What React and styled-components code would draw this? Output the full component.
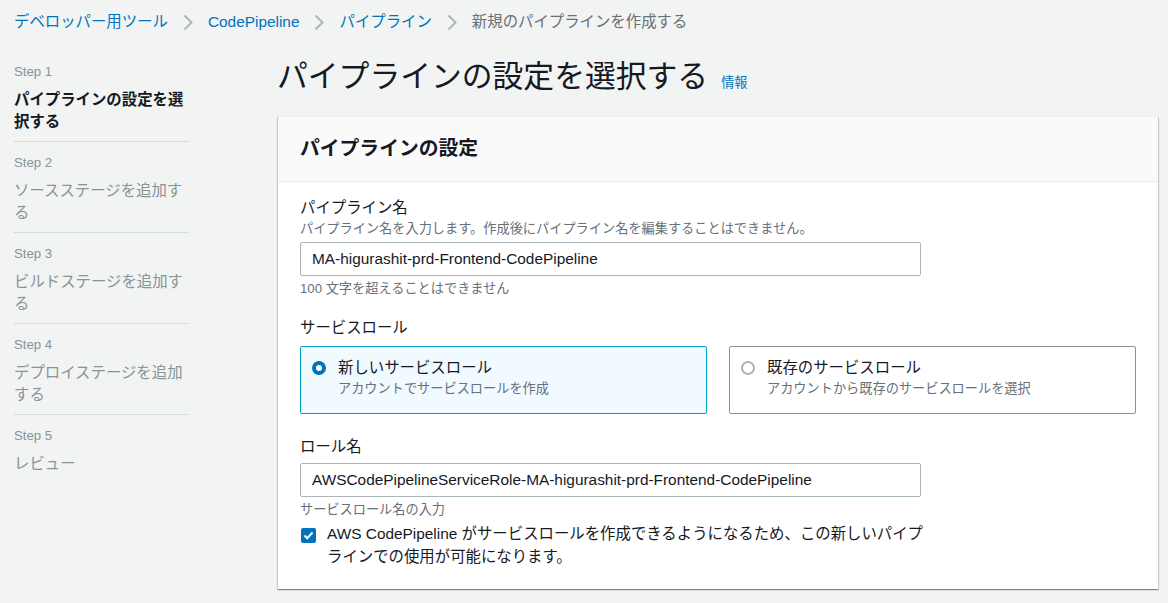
import React from "react";
import styled, { createGlobalStyle } from "styled-components";

const Global = createGlobalStyle`
  html, body { margin: 0; padding: 0; background: #f2f3f3; }
  body {
    font-family: "Liberation Sans", "Noto Sans CJK JP", sans-serif;
    color: #16191f;
    font-size: 15.4px;
  }
  * { box-sizing: border-box; }
`;

const Page = styled.div`
  padding: 12px 10px 12px 14px;
  width: 1168px;
  min-height: 603px;
`;

const Crumbs = styled.nav`
  display: flex;
  align-items: center;
  height: 20px;
  line-height: 20px;
  font-size: 15.4px;
`;

const CrumbLink = styled.a`
  color: #0073bb;
  text-decoration: none;
`;

const CrumbCurrent = styled.span`
  color: #687078;
`;

const Sep = styled.svg`
  width: 10px;
  height: 17px;
  margin: 0 15px 0 15px;
  flex: none;
`;

const Layout = styled.div`
  display: flex;
  align-items: flex-start;
  gap: 89px;
  margin-top: 20px;
`;

const Nav = styled.ol`
  list-style: none;
  margin: 0;
  padding: 11px 0 0 0;
  width: 175px;
  flex: none;
`;

const NavItem = styled.li`
  padding: ${(p) => (p.$first ? "0 0 8px" : "12px 0 8px")};
  border-bottom: ${(p) => (p.$last ? "none" : "1px solid #d5dbdb")};
`;

const StepLabel = styled.div`
  font-size: 13.2px;
  line-height: 18px;
  color: #879596;
  margin-bottom: 8px;
`;

const StepTitle = styled.div`
  font-size: 15.4px;
  line-height: 22px;
  color: ${(p) => (p.$active ? "#16191f" : "#879596")};
  font-weight: ${(p) => (p.$active ? 700 : 400)};
`;

const Content = styled.main`
  flex: 1;
  min-width: 0;
`;

const TitleRow = styled.div`
  display: flex;
  align-items: baseline;
  height: 49px;
  padding-top: 1px;
  margin-left: -1px;
`;

const H1 = styled.h1`
  margin: 0;
  font-size: 30.8px;
  line-height: 48px;
  font-weight: 400;
  color: #16191f;
`;

const Info = styled.a`
  margin-left: 13px;
  font-size: 13.2px;
  color: #0073bb;
  text-decoration: none;
`;

const Card = styled.section`
  margin-top: 15px;
  background: #fff;
  border-top: 1px solid #eaeded;
  box-shadow: 0 1px 1px 0 rgba(0, 28, 36, 0.3), 1px 1px 1px 0 rgba(0, 28, 36, 0.15),
    -1px 1px 1px 0 rgba(0, 28, 36, 0.15);
`;

const CardHeader = styled.header`
  background: #fafafa;
  border-bottom: 1px solid #eaeded;
  padding: 18px 22px 19px;
`;

const H2 = styled.h2`
  margin: 0;
  font-size: 19.8px;
  line-height: 27px;
  font-weight: 700;
`;

const CardBody = styled.div`
  padding: 15px 22px 21px;
`;

const Field = styled.div`
  margin-top: ${(p) => p.$gap || 0}px;
`;

const Label = styled.div`
  font-size: 15.4px;
  line-height: 22px;
  color: #16191f;
`;

const Desc = styled.div`
  font-size: 13.2px;
  line-height: 20px;
  color: #687078;
`;

const Hint = styled.div`
  margin-top: 3px;
  font-size: 13.2px;
  line-height: 20px;
  color: #687078;
`;

const Input = styled.input`
  display: block;
  width: 621px;
  height: 34px;
  margin-top: ${(p) => p.$mt || 3}px;
  padding: 0 11px;
  border: 1px solid #aab7b8;
  border-radius: 2px;
  font-family: inherit;
  font-size: 15.4px;
  color: #16191f;
  background: #fff;
  outline: none;
`;

const Tiles = styled.div`
  display: grid;
  grid-template-columns: 1fr 1fr;
  gap: 22px;
  margin-top: 7px;
`;

const Tile = styled.label`
  display: flex;
  align-items: flex-start;
  gap: 12px;
  height: 68px;
  padding: 10px 14px 0 11px;
  border: 1px solid ${(p) => (p.$selected ? "#00a1c9" : "#879596")};
  background: ${(p) => (p.$selected ? "#f1faff" : "#fff")};
  border-radius: 2px;
`;

const Radio = styled.span`
  flex: none;
  width: 14px;
  height: 14px;
  margin-top: 4px;
  border-radius: 50%;
  border: ${(p) => (p.$checked ? "4px solid #0073bb" : "2px solid #aab7b8")};
  background: #fff;
`;

const TileText = styled.div`
  display: flex;
  flex-direction: column;
`;

const TileTitle = styled.span`
  font-size: 15.4px;
  line-height: 22px;
  color: #16191f;
`;

const TileDesc = styled.span`
  font-size: 13.2px;
  line-height: 19px;
  color: #687078;
`;

const CheckRow = styled.div`
  display: flex;
  align-items: flex-start;
  gap: 11px;
  margin-top: 3px;
`;

const Box = styled.span`
  flex: none;
  width: 15px;
  height: 15px;
  margin-top: 5px;
  margin-left: 1px;
  border-radius: 2px;
  background: #0073bb;
  display: flex;
  align-items: center;
  justify-content: center;
`;

const CheckText = styled.div`
  font-size: 15.4px;
  line-height: 22.5px;
  color: #16191f;
`;

const Chevron = () => (
  <Sep viewBox="0 0 10 17">
    <path d="M1.5 1.5 L8.5 8.5 L1.5 15.5" fill="none" stroke="#aab7b8" strokeWidth="2" />
  </Sep>
);

const steps = [
  { n: 1, t: "パイプラインの設定を選択する", active: true },
  { n: 2, t: "ソースステージを追加する" },
  { n: 3, t: "ビルドステージを追加する" },
  { n: 4, t: "デプロイステージを追加する" },
  { n: 5, t: "レビュー" },
];

export default function App() {
  return (
    <>
      <Global />
      <Page>
        <Crumbs>
          <CrumbLink href="#">デベロッパー用ツール</CrumbLink>
          <Chevron />
          <CrumbLink href="#">CodePipeline</CrumbLink>
          <Chevron />
          <CrumbLink href="#">パイプライン</CrumbLink>
          <Chevron />
          <CrumbCurrent>新規のパイプラインを作成する</CrumbCurrent>
        </Crumbs>
        <Layout>
          <Nav>
            {steps.map((s, i) => (
              <NavItem key={s.n} $first={i === 0} $last={i === steps.length - 1}>
                <StepLabel>Step {s.n}</StepLabel>
                <StepTitle $active={s.active}>{s.t}</StepTitle>
              </NavItem>
            ))}
          </Nav>
          <Content>
            <TitleRow>
              <H1>パイプラインの設定を選択する</H1>
              <Info href="#">情報</Info>
            </TitleRow>
            <Card>
              <CardHeader>
                <H2>パイプラインの設定</H2>
              </CardHeader>
              <CardBody>
                <Field>
                  <Label>パイプライン名</Label>
                  <Desc>パイプライン名を入力します。作成後にパイプライン名を編集することはできません。</Desc>
                  <Input readOnly value="MA-higurashit-prd-Frontend-CodePipeline" />
                  <Hint>100 文字を超えることはできません</Hint>
                </Field>
                <Field $gap={18}>
                  <Label>サービスロール</Label>
                  <Tiles>
                    <Tile $selected>
                      <Radio $checked />
                      <TileText>
                        <TileTitle>新しいサービスロール</TileTitle>
                        <TileDesc>アカウントでサービスロールを作成</TileDesc>
                      </TileText>
                    </Tile>
                    <Tile>
                      <Radio />
                      <TileText>
                        <TileTitle>既存のサービスロール</TileTitle>
                        <TileDesc>アカウントから既存のサービスロールを選択</TileDesc>
                      </TileText>
                    </Tile>
                  </Tiles>
                </Field>
                <Field $gap={22}>
                  <Label>ロール名</Label>
                  <Input
                    $mt={5}
                    readOnly
                    value="AWSCodePipelineServiceRole-MA-higurashit-prd-Frontend-CodePipeline"
                  />
                  <Hint>サービスロール名の入力</Hint>
                  <CheckRow>
                    <Box>
                      <svg width="11" height="9" viewBox="0 0 11 9">
                        <path d="M1.5 4.5 L4.2 7.2 L9.5 1.5" fill="none" stroke="#fff" strokeWidth="2" />
                      </svg>
                    </Box>
                    <CheckText>
                      AWS CodePipeline がサービスロールを作成できるようになるため、この新しいパイプ
                      <br />
                      ラインでの使用が可能になります。
                    </CheckText>
                  </CheckRow>
                </Field>
              </CardBody>
            </Card>
          </Content>
        </Layout>
      </Page>
    </>
  );
}
